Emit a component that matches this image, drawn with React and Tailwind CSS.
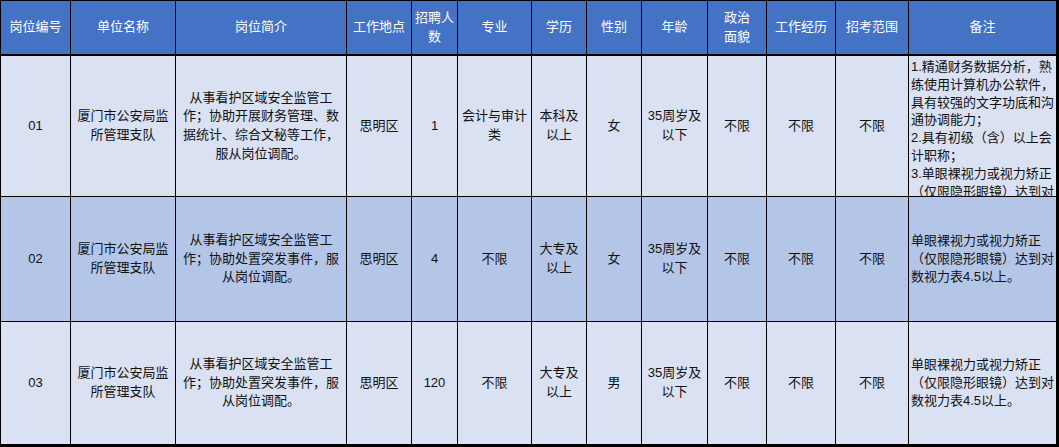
import React from 'react';

const headers = [
  ['岗位编号'],
  ['单位名称'],
  ['岗位简介'],
  ['工作地点'],
  ['招聘人', '数'],
  ['专业'],
  ['学历'],
  ['性别'],
  ['年龄'],
  ['政治', '面貌'],
  ['工作经历'],
  ['招考范围'],
  ['备注'],
];

const name = ['厦门市公安局监', '所管理支队'];
const eyeNote = ['单眼裸视力或视力矫正', '（仅限隐形眼镜）达到对', '数视力表4.5以上。'];

const rows = [
  {
    bg: 'bg-[#d9e1f2]',
    cells: [
      ['01'],
      name,
      ['从事看护区域安全监管工', '作；协助开展财务管理、数', '据统计、综合文秘等工作，', '服从岗位调配。'],
      ['思明区'],
      ['1'],
      ['会计与审计', '类'],
      ['本科及', '以上'],
      ['女'],
      ['35周岁及', '以下'],
      ['不限'],
      ['不限'],
      ['不限'],
    ],
    note: [
      '1.精通财务数据分析，熟',
      '练使用计算机办公软件，',
      '具有较强的文字功底和沟',
      '通协调能力；',
      '2.具有初级（含）以上会',
      '计职称；',
      '3.单眼裸视力或视力矫正',
      '（仅限隐形眼镜）达到对',
      '数视力表4.5以上。',
    ],
    overflow: true,
  },
  {
    bg: 'bg-[#b4c6e7]',
    cells: [
      ['02'],
      name,
      ['从事看护区域安全监管工', '作；协助处置突发事件，服', '从岗位调配。'],
      ['思明区'],
      ['4'],
      ['不限'],
      ['大专及', '以上'],
      ['女'],
      ['35周岁及', '以下'],
      ['不限'],
      ['不限'],
      ['不限'],
    ],
    note: eyeNote,
  },
  {
    bg: 'bg-[#d9e1f2]',
    cells: [
      ['03'],
      name,
      ['从事看护区域安全监管工', '作；协助处置突发事件，服', '从岗位调配。'],
      ['思明区'],
      ['120'],
      ['不限'],
      ['大专及', '以上'],
      ['男'],
      ['35周岁及', '以下'],
      ['不限'],
      ['不限'],
      ['不限'],
    ],
    note: eyeNote,
  },
];

const Lines = ({ lines }) =>
  lines.map((l, i) => (
    <div key={i} className="whitespace-nowrap">
      {l}
    </div>
  ));

export default function App() {
  return (
    <div className="w-[1059px] h-[447px] bg-white overflow-hidden font-['Liberation_Sans','Noto_Sans_CJK_SC',sans-serif] text-[13px] leading-[18.7px] text-[#111]">
      <div className="grid grid-cols-[69px_104px_170px_64px_45px_73px_54px_54px_65px_58px_68px_72px_147px] grid-rows-[54px_140px_124px_122px] gap-px bg-black pl-px pt-px pr-[3px] pb-[3px]">
        {/* 表头 */}
        {headers.map((h, i) => (
          <div
            key={i}
            className="bg-[#4472c4] text-white border-b border-black flex flex-col items-center justify-center text-center"
          >
            <Lines lines={h} />
          </div>
        ))}

        {/* 数据行 */}
        {rows.map((r, ri) => (
          <React.Fragment key={ri}>
            {r.cells.map((c, ci) => (
              <div key={ci} className={`${r.bg} flex flex-col items-center justify-center text-center`}>
                <Lines lines={c} />
              </div>
            ))}
            {r.overflow ? (
              <div className={`${r.bg} overflow-hidden pl-[2px] pt-[2px] leading-[17.8px]`}>
                <Lines lines={r.note} />
              </div>
            ) : (
              <div className={`${r.bg} flex flex-col justify-center pl-[2px] leading-[18.3px]`}>
                <Lines lines={r.note} />
              </div>
            )}
          </React.Fragment>
        ))}
      </div>
    </div>
  );
}
